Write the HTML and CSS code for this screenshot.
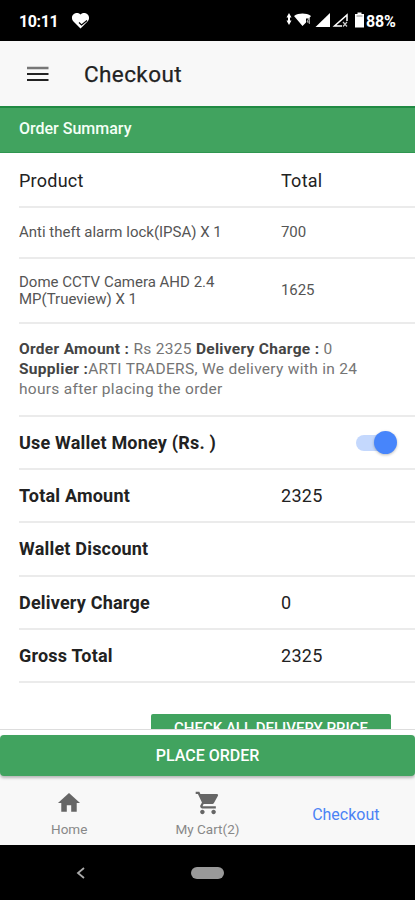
FILE: index.html
```html
<!DOCTYPE html>
<html lang="en">
<head>
<meta charset="utf-8">
<title>Checkout</title>
<link rel="stylesheet" href="styles.css">
</head>
<body>
<div class="phone">
  <div class="status">
    <span class="clock">10:11</span>
    <svg class="heart" width="20" height="18" viewBox="0 0 20 18"><path d="M9.500 16.500L2 9C-1.500 4 4.500-1.500 9.500 2.500C14.500-1.500 20.500 4 17 9Z" fill="#fff"/><path d="M8 10.500l2.500 2.500 5.500-4.500" fill="none" stroke="#000" stroke-width="1.200"/></svg>
    <svg class="signals" width="79" height="18" viewBox="0 0 79 18">
      <path d="M3 1l2.500 4.500h-5zM3 13L.5 8.500h5zM2 5h2v4H2z" fill="#fff"/>
      <path d="M8 4C13 .8 20 .8 25 4l-2 2.500h-3v4L16.500 14Z" fill="#fff"/><path d="M23 6l-2 4h3M23.300 6v6" stroke="#bbb" fill="none"/>
      <path d="M44 1v14H29.500Z" fill="#fff"/>
      <path d="M61 3v11H48.500Z" fill="none" stroke="#fff" stroke-width="1.500"/><path d="M56 9h6v7h-6z" fill="#000"/><path d="M57 10l4 4.500m0-4.500l-4 4.500" stroke="#ccc" stroke-width="1.200"/>
      <path d="M69 2h2.500V.5h4V2H78v13.500h-9z" fill="#fff"/><path d="M70.500 4h6" stroke="#888"/>
    </svg>
    <span class="battery">88%</span>
  </div>
  <header class="toolbar">
    <svg width="22" height="16" viewBox="0 0 22 16"><path d="M0 2h21.500" stroke="#777" stroke-width="2.500"/><path d="M0 8h21.500M0 14h21.500" stroke="#222" stroke-width="2"/></svg>
    <h1><span>Checkout</span></h1>
  </header>
  <main>
    <div class="summary"><span>Order Summary</span></div>
    <div class="row head"><span>Product</span><span>Total</span></div>
    <div class="row item short"><span>Anti theft alarm lock(IPSA) X 1</span><span>700</span></div>
    <div class="row item tall"><span>Dome CCTV Camera AHD 2.4<br>MP(Trueview) X 1</span><span>1625</span></div>
    <div class="row note"><p><b>Order Amount :</b> Rs 2325 <b>Delivery Charge :</b> 0<br><b>Supplier :</b>ARTI TRADERS, We delivery with in 24<br>hours after placing the order</p></div>
    <div class="row sum"><b>Use Wallet Money (Rs. )</b><i class="toggle"></i></div>
    <div class="row sum"><b>Total Amount</b><span>2325</span></div>
    <div class="row sum"><b>Wallet Discount</b></div>
    <div class="row sum"><b>Delivery Charge</b><span>0</span></div>
    <div class="row sum"><b>Gross Total</b><span>2325</span></div>
    <button class="check"><span>CHECK ALL DELIVERY PRICE</span></button>
  </main>
  <footer>
    <div class="action"><button class="place"><span>PLACE ORDER</span></button></div>
    <nav>
      <a><svg width="28" height="28" viewBox="-.7 -.7 25.400 25.400"><path d="M10 20v-6h4v6h5v-8h3L12 3 2 12h3v8z"/></svg><span>Home</span></a>
      <a><svg class="cart" width="28" height="28" viewBox="-.5 -.5 25 25"><path d="M7 18c-1.100 0-1.990.9-1.990 2S5.900 22 7 22s2-.9 2-2-.9-2-2-2zM1 2v2h2l3.600 7.590-1.350 2.450c-.16.28-.25.610-.25.960 0 1.100.9 2 2 2h12v-2H7.420c-.14 0-.25-.11-.25-.25l.03-.12.900-1.630h7.450c.750 0 1.410-.41 1.750-1.030l3.580-6.490A1 1 0 0 0 20 4H5.210l-.94-2H1zm16 16c-1.100 0-1.990.9-1.990 2s.890 2 1.990 2 2-.9 2-2-.9-2-2-2z"/></svg><span>My Cart(2)</span></a>
      <a class="active"><span>Checkout</span></a>
    </nav>
  </footer>
  <div class="android">
    <svg width="10" height="12" viewBox="0 0 10 12"><path d="M8 1L2 6l6 5" fill="none" stroke="#aaa" stroke-width="1.800"/></svg>
    <i class="pill"></i>
    <i></i>
  </div>
</div>
</body>
</html>
```
FILE: styles.css
```css
* { box-sizing: border-box; }
body { margin: 0; font-family: Roboto, "Liberation Sans", sans-serif; background: #fff; color: #222; }
.phone { width: 415px; height: 900px; display: flex; flex-direction: column; overflow: hidden; }
.status { height: 41px; flex: none; background: #000; color: #fff; display: flex; align-items: center; padding: 2px 17px 0 19px; font-size: 16px; font-weight: 700; }
.clock { width: 40px; letter-spacing: -.4px; }
.heart { margin-left: 12px; margin-top: -2px; }
.signals { margin-left: auto; margin-right: 1px; margin-top: -1px; }
.battery { width: 32px; letter-spacing: -.2px; }
.toolbar { height: 65px; flex: none; background: #f8f8f8; display: flex; align-items: center; padding: 0 0 0 27px; }
h1 { margin: 0 0 0 35px; font-size: 22.500px; font-weight: 400; letter-spacing: .4px; color: #222; -webkit-text-stroke: .25px #222; }
main { flex: 1; min-height: 0; overflow: hidden; display: flex; flex-direction: column; }
.summary { height: 47px; flex: none; background: #41a35f; border-top: 2px solid #208a43; border-bottom: 1px solid #2f9650; color: #f4fff6; padding: 0 19px 3px; display: flex; align-items: center; font-size: 16px; font-weight: 500; }
.row { flex: none; margin-left: 19px; border-bottom: 2px solid #ebebeb; display: grid; grid-template-columns: 262px 1fr; align-items: center; }
.head { height: 55px; font-size: 18px; letter-spacing: .25px; padding-top: 2px; }
.item { color: #555; font-size: 15px; line-height: 17px; letter-spacing: 0; }
.item span:last-child { letter-spacing: -.1px; }
.short { height: 51px; }
.tall { height: 65px; }
.note { height: 93px; display: block; color: #757575; font-size: 15.500px; line-height: 20px; padding-top: 15px; letter-spacing: .3px; white-space: nowrap; }
.note p { margin: 0; }
.note b { color: #444; font-weight: 700; }
.sum { height: 53.200px; font-size: 18px; letter-spacing: .3px; color: #222; }
.sum b { font-weight: 700; letter-spacing: .2px; }
.toggle { display: block; width: 40px; height: 16px; margin-left: 75px; border-radius: 8px; background: #c4d8fd; position: relative; }
.toggle::after { content: ""; position: absolute; right: -1px; top: -4px; width: 23px; height: 23px; border-radius: 50%; background: #4785fb; box-shadow: 0 1px 3px #0004; }
button { border: 0; background: #41a35f; color: #fff; font-family: inherit; font-weight: 500; padding: 0; }
.check { flex: none; width: 240px; height: 40px; margin: 31px 0 0 151px; border-radius: 2px; padding-bottom: 11px; font-size: 15px; white-space: nowrap; }
footer { height: 116px; flex: none; border-top: 1px solid #ddd; background: #f8f8f8; display: flex; flex-direction: column; }
.action { height: 46px; flex: none; border-top: 5px solid #fff; }
.place { display: block; width: 100%; height: 41px; border-radius: 4px; font-size: 16px; padding-bottom: 1px; box-shadow: 0 2px 3px #0004; }
nav { flex: 1; display: grid; grid-template-columns: repeat(3, 1fr); color: #888; font-size: 13.500px; }
nav a { display: flex; flex-direction: column; align-items: center; padding-top: 13px; }
nav svg { fill: #666; }
nav .cart { margin-left: 2px; }
nav a span { margin-top: 4px; }
nav .active { color: #4b83f5; font-size: 16px; padding-top: 29px; }
nav .active span { margin: 0; }
.android { height: 55px; flex: none; background: #000; display: grid; grid-template-columns: 1fr 33px 1fr; align-items: center; }
.android svg { margin-left: 76px; }
.pill { height: 12px; border-radius: 6px; background: #999; }
```
